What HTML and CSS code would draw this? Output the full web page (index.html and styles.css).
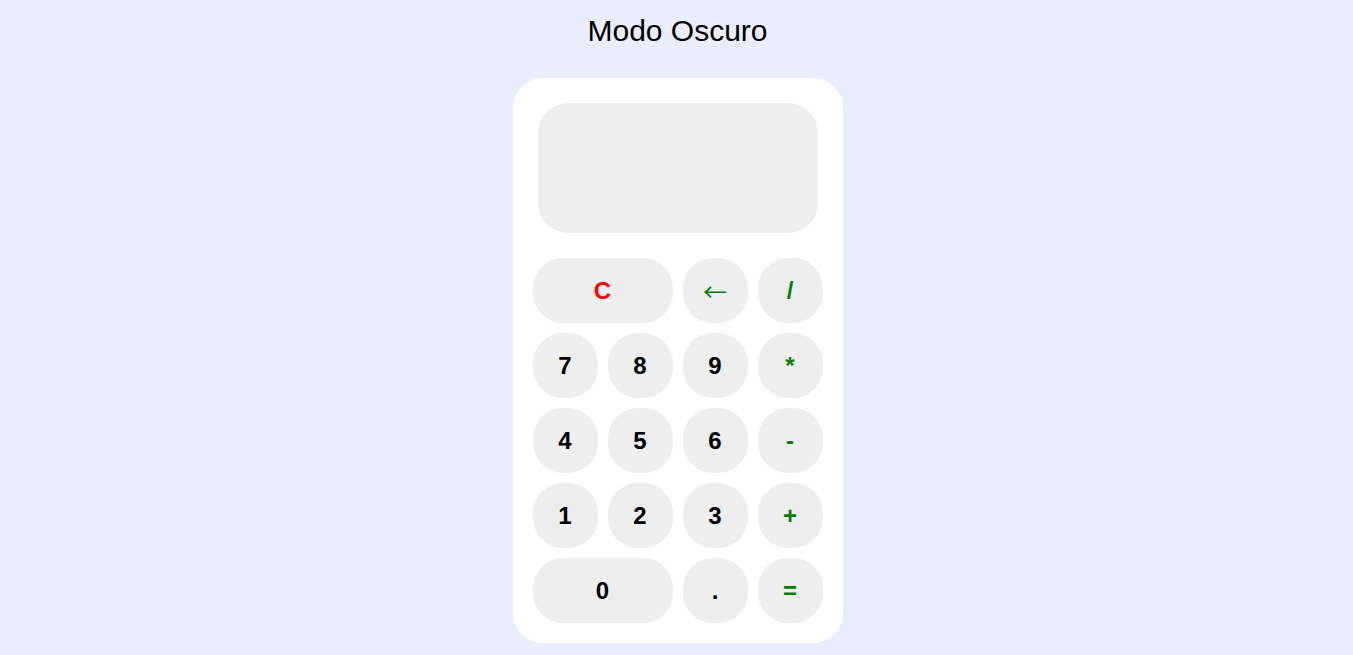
FILE: index.html
```html
<!DOCTYPE html>
<html lang="es">
<head>
<meta charset="utf-8">
<title>Calculadora</title>
<link rel="stylesheet" href="styles.css">
</head>
<body>
<h1 class="title">Modo Oscuro</h1>
<div class="calculator">
  <div class="display"></div>
  <div class="keys">
    <button class="key wide clear">C</button>
    <button class="key op arrow">←</button>
    <button class="key op">/</button>
    <button class="key">7</button>
    <button class="key">8</button>
    <button class="key">9</button>
    <button class="key op">*</button>
    <button class="key">4</button>
    <button class="key">5</button>
    <button class="key">6</button>
    <button class="key op">-</button>
    <button class="key">1</button>
    <button class="key">2</button>
    <button class="key">3</button>
    <button class="key op">+</button>
    <button class="key wide">0</button>
    <button class="key">.</button>
    <button class="key op">=</button>
  </div>
</div>
</body>
</html>
```

FILE: styles.css
```css
html, body {
  margin: 0;
  padding: 0;
}
body {
  background: #eaedfd;
  font-family: "Liberation Sans", Arial, sans-serif;
  display: flex;
  flex-direction: column;
  align-items: center;
  min-height: 655px;
  padding-left: 2px;
}
.title {
  margin: 14px 0 0;
  font-size: 30px;
  font-weight: normal;
  line-height: 34px;
  color: #000;
}
.calculator {
  margin-top: 30px;
  width: 290px;
  padding: 25px 20px 20px;
  background: #fff;
  border-radius: 30px;
}
.display {
  margin: 0 5px;
  height: 130px;
  background: #eeeeee;
  border-radius: 30px;
}
.keys {
  margin-top: 25px;
  display: grid;
  grid-template-columns: repeat(4, 65px);
  grid-auto-rows: 65px;
  gap: 10px;
}
.key {
  border: none;
  padding: 0;
  background: #eeeeee;
  border-radius: 30px;
  font-family: "Liberation Sans", Arial, sans-serif;
  font-size: 24px;
  font-weight: bold;
  color: #000;
}
.wide {
  grid-column: span 2;
}
.clear {
  color: #ff0000;
}
.op {
  color: #008000;
}
.arrow {
  font-family: "Noto Sans CJK SC", sans-serif;
  font-weight: normal;
  line-height: 1;
}
```
